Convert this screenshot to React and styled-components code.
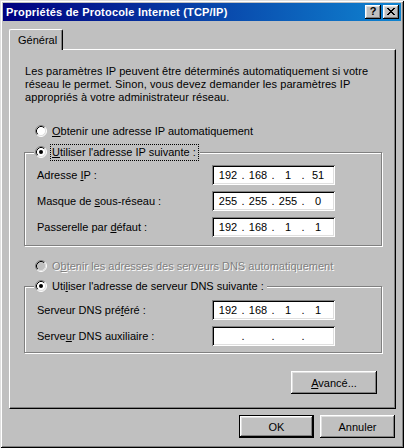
import React from 'react';
import styled, { createGlobalStyle, css } from 'styled-components';

const GlobalStyle = createGlobalStyle`
  html, body {
    margin: 0;
    padding: 0;
    background: #c0c0c0;
  }
  body {
    font-family: "Liberation Sans", Arial, sans-serif;
    font-size: 11px;
    color: #000;
  }
`;

const Window = styled.div`
  width: 404px;
  height: 448px;
  box-sizing: border-box;
  padding: 3px;
  background: #c0c0c0;
  box-shadow: inset 1px 1px 0 #dfdfdf, inset -1px -1px 0 #000,
    inset 2px 2px 0 #fff, inset -2px -2px 0 #808080;
  display: flex;
  flex-direction: column;
`;

const TitleBar = styled.div`
  height: 18px;
  display: flex;
  align-items: center;
  justify-content: space-between;
  padding: 0 2px 0 3px;
  background: linear-gradient(to right, #000080, #1084d0);
`;

const Title = styled.span`
  color: #fff;
  font-weight: bold;
  font-size: 11px;
  line-height: 13px;
  letter-spacing: 0.2px;
  white-space: nowrap;
`;

const CaptionButtons = styled.div`
  display: flex;
  gap: 2px;
`;

const CaptionButton = styled.div`
  width: 16px;
  height: 14px;
  box-sizing: border-box;
  background: #c0c0c0;
  box-shadow: inset -1px -1px 0 #000, inset 1px 1px 0 #fff,
    inset -2px -2px 0 #808080, inset 2px 2px 0 #dfdfdf;
  display: flex;
  align-items: center;
  justify-content: center;
  font-weight: bold;
  font-size: 11px;
  line-height: 11px;
  padding-bottom: 1px;
`;

const Body = styled.div`
  padding: 8px 5px 0 6px;
  display: flex;
  flex-direction: column;
`;

const TabStrip = styled.div`
  display: flex;
  height: 21px;
  margin-bottom: -1px;
  position: relative;
  z-index: 1;
`;

const Tab = styled.div`
  width: 54px;
  box-sizing: border-box;
  padding: 0 0 1px 8px;
  background: #c0c0c0;
  border-left: 1px solid #fff;
  border-top: 1px solid #fff;
  border-right: 1px solid #000;
  border-radius: 2px 2px 0 0;
  box-shadow: inset -1px 0 0 #808080;
  display: flex;
  align-items: center;
`;

const Panel = styled.div`
  height: 360px;
  box-sizing: border-box;
  border-left: 1px solid #fff;
  border-top: 1px solid #fff;
  border-right: 1px solid #000;
  border-bottom: 1px solid #000;
  box-shadow: inset -1px -1px 0 #808080;
  padding: 15px 12px 0 15px;
  display: flex;
  flex-direction: column;
  align-items: flex-start;
`;

const Intro = styled.p`
  margin: 0;
  line-height: 13px;
  letter-spacing: 0.08px;
  white-space: nowrap;
`;

const RadioRow = styled.div`
  display: flex;
  align-items: center;
  gap: 5px;
  height: 12px;
  line-height: 12px;
  margin: ${(p) => p.$mt}px 0 0 10px;
  white-space: nowrap;
`;

const Group = styled.fieldset`
  width: 358px;
  box-sizing: border-box;
  min-inline-size: 0;
  margin: ${(p) => p.$mt}px 0 0 -1px;
  padding: ${(p) => p.$pt}px 0 ${(p) => p.$pb}px 0;
  border: 1px solid #808080;
  box-shadow: inset 1px 1px 0 #fff, 1px 1px 0 #fff;
  display: flex;
  flex-direction: column;
  gap: 6px;
`;

const Legend = styled.legend`
  margin-left: 9px;
  padding: 0 3px 0 1px;
  height: 12px;
  line-height: 12px;
  background: #c0c0c0;
  display: flex;
  align-items: center;
  gap: 5px;
  white-space: nowrap;
`;

const RadioLabel = styled.span`
  color: ${(p) => (p.$disabled ? '#808080' : '#000')};
  text-shadow: ${(p) => (p.$disabled ? '1px 1px 0 #fff' : 'none')};
  ${(p) =>
    p.$focused &&
    css`
      outline: 1px dotted #000;
      outline-offset: 1px;
      padding: 0 1px 1px 0;
    `}
`;

const FieldRow = styled.div`
  display: flex;
  align-items: center;
  height: 20px;
  padding-left: 12px;
`;

const FieldLabel = styled.span`
  width: 175px;
  line-height: 12px;
  white-space: nowrap;
`;

const IpBox = styled.div`
  width: 123px;
  height: 20px;
  box-sizing: border-box;
  padding-left: 3px;
  background: #fff;
  box-shadow: inset 1px 1px 0 #808080, inset -1px -1px 0 #fff,
    inset 2px 2px 0 #000, inset -2px -2px 0 #dfdfdf;
  display: flex;
  align-items: center;
  line-height: 12px;
`;

const Octet = styled.span`
  width: 26px;
  text-align: center;
`;

const Dot = styled.span`
  width: 4px;
  text-align: center;
`;

const AdvancedRow = styled.div`
  align-self: stretch;
  display: flex;
  justify-content: flex-end;
  margin-top: 18px;
  padding-right: 6px;
`;

const Footer = styled.div`
  display: flex;
  justify-content: flex-end;
  gap: 6px;
  margin-top: 6px;
  padding-right: 1px;
`;

const Button = styled.button`
  width: ${(p) => p.$w}px;
  height: 23px;
  box-sizing: border-box;
  margin: 0;
  padding: 0;
  border: none;
  background: #c0c0c0;
  font: inherit;
  color: #000;
  box-shadow: inset -1px -1px 0 #000, inset 1px 1px 0 #fff,
    inset -2px -2px 0 #808080, inset 2px 2px 0 #dfdfdf;
  ${(p) =>
    p.$default &&
    css`
      box-shadow: inset 0 0 0 1px #000, inset -2px -2px 0 #000,
        inset 2px 2px 0 #fff, inset -3px -3px 0 #808080,
        inset 3px 3px 0 #dfdfdf;
    `}
`;

const Radio = ({ checked, disabled }) => (
  <svg width="12" height="12" viewBox="0 0 12 12">
    <circle cx="6" cy="6" r="5" fill={disabled ? '#c0c0c0' : '#fff'} />
    <path d="M2.11 9.89 A5.5 5.5 0 0 1 9.89 2.11" fill="none" stroke="#808080" />
    <path d="M9.89 2.11 A5.5 5.5 0 0 1 2.11 9.89" fill="none" stroke="#fff" />
    <path d="M2.82 9.18 A4.5 4.5 0 0 1 9.18 2.82" fill="none" stroke="#000" />
    <path d="M9.18 2.82 A4.5 4.5 0 0 1 2.82 9.18" fill="none" stroke="#dfdfdf" />
    {checked && <circle cx="6" cy="6" r="2" fill={disabled ? '#808080' : '#000'} />}
  </svg>
);

const CloseGlyph = () => (
  <svg width="8" height="7" viewBox="0 0 8 7" shapeRendering="crispEdges">
    <path
      d="M0 0h2v1H0zM6 0h2v1H6zM1 1h2v1H1zM5 1h2v1H5zM2 2h4v1H2zM3 3h2v1H3zM2 4h4v1H2zM1 5h2v1H1zM5 5h2v1H5zM0 6h2v1H0zM6 6h2v1H6z"
      fill="#000"
    />
  </svg>
);

const IpField = ({ parts }) => (
  <IpBox>
    {parts.map((part, i) => (
      <React.Fragment key={i}>
        {i > 0 && <Dot>.</Dot>}
        <Octet>{part}</Octet>
      </React.Fragment>
    ))}
  </IpBox>
);

const ipRows = [
  { label: <>Adresse <u>I</u>P :</>, parts: ['192', '168', '1', '51'] },
  { label: <>Masque de <u>s</u>ous-réseau :</>, parts: ['255', '255', '255', '0'] },
  { label: <>Passerelle par <u>d</u>éfaut :</>, parts: ['192', '168', '1', '1'] },
];

const dnsRows = [
  { label: <>Serveur DNS pré<u>f</u>éré :</>, parts: ['192', '168', '1', '1'] },
  { label: <>Serve<u>u</u>r DNS auxiliaire :</>, parts: ['', '', '', ''] },
];

export default function App() {
  return (
    <>
      <GlobalStyle />
      <Window>
        <TitleBar>
          <Title>Propriétés de Protocole Internet (TCP/IP)</Title>
          <CaptionButtons>
            <CaptionButton>?</CaptionButton>
            <CaptionButton>
              <CloseGlyph />
            </CaptionButton>
          </CaptionButtons>
        </TitleBar>
        <Body>
          <TabStrip>
            <Tab>Général</Tab>
          </TabStrip>
          <Panel>
            <Intro>
              Les paramètres IP peuvent être déterminés automatiquement si votre
              <br />
              réseau le permet. Sinon, vous devez demander les paramètres IP
              <br />
              appropriés à votre administrateur réseau.
            </Intro>

            <RadioRow $mt={21}>
              <Radio />
              <RadioLabel>
                <u>O</u>btenir une adresse IP automatiquement
              </RadioLabel>
            </RadioRow>

            <Group $mt={9} $pt={7} $pb={8}>
              <Legend>
                <Radio checked />
                <RadioLabel $focused>
                  <u>U</u>tiliser l'adresse IP suivante :
                </RadioLabel>
              </Legend>
              {ipRows.map((row, i) => (
                <FieldRow key={i}>
                  <FieldLabel>{row.label}</FieldLabel>
                  <IpField parts={row.parts} />
                </FieldRow>
              ))}
            </Group>

            <RadioRow $mt={14}>
              <Radio disabled />
              <RadioLabel $disabled>
                O<u>b</u>tenir les adresses des serveurs DNS automatiquement
              </RadioLabel>
            </RadioRow>

            <Group $mt={8} $pt={8} $pb={6}>
              <Legend>
                <Radio checked />
                <RadioLabel>
                  Uti<u>l</u>iser l'adresse de serveur DNS suivante :
                </RadioLabel>
              </Legend>
              {dnsRows.map((row, i) => (
                <FieldRow key={i}>
                  <FieldLabel>{row.label}</FieldLabel>
                  <IpField parts={row.parts} />
                </FieldRow>
              ))}
            </Group>

            <AdvancedRow>
              <Button $w={86}>
                <u>A</u>vancé...
              </Button>
            </AdvancedRow>
          </Panel>
          <Footer>
            <Button $w={75} $default>
              OK
            </Button>
            <Button $w={75}>Annuler</Button>
          </Footer>
        </Body>
      </Window>
    </>
  );
}
